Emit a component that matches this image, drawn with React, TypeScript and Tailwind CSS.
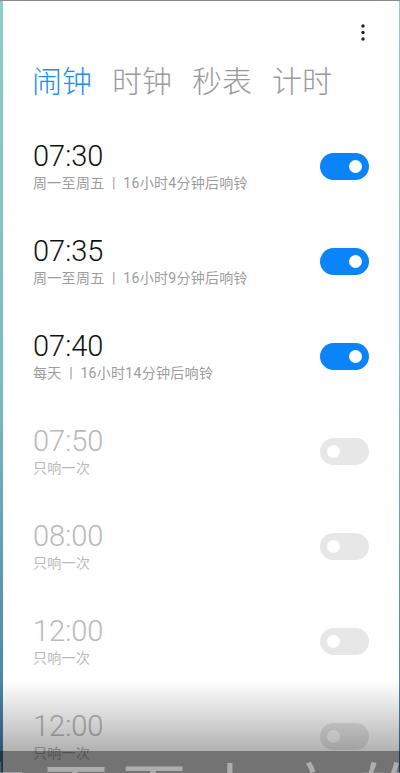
import React from "react";

type Alarm = {
  time: string;
  note: string;
  on: boolean;
};

const alarms: Alarm[] = [
  { time: "07:30", note: "周一至周五 | 16小时4分钟后响铃", on: true },
  { time: "07:35", note: "周一至周五 | 16小时9分钟后响铃", on: true },
  { time: "07:40", note: "每天 | 16小时14分钟后响铃", on: true },
  { time: "07:50", note: "只响一次", on: false },
  { time: "08:00", note: "只响一次", on: false },
  { time: "12:00", note: "只响一次", on: false },
  { time: "12:00", note: "只响一次", on: false },
];

const Toggle: React.FC<{ on: boolean }> = ({ on }) => (
  <div
    className={
      on
        ? "flex items-center justify-end w-[49px] h-[27px] px-[7px] rounded-full bg-[#0b84fa]"
        : "flex items-center justify-start w-[49px] h-[27px] px-[7px] rounded-full bg-[#e7e7e7]"
    }
  >
    <div className="w-[13px] h-[13px] rounded-full bg-white" />
  </div>
);

const App: React.FC = () => {
  return (
    <div className="relative w-[400px] h-[773px] overflow-hidden border-t border-[#8a8a8a] bg-gradient-to-b from-[#8fcccb] via-[#79bcbf] to-[#3f78a0] pl-[3px] pr-[1px] font-[Roboto,'Noto_Sans_CJK_SC',sans-serif]">
      <div className="h-full bg-white">
        {/* 상단 메뉴 */}
        <div className="flex justify-end pt-[22px] pr-[33px]">
          <svg width="6" height="18" viewBox="0 0 6 18">
            <circle cx="3" cy="3" r="1.7" fill="#222" />
            <circle cx="3" cy="9.5" r="1.7" fill="#222" />
            <circle cx="3" cy="16" r="1.7" fill="#222" />
          </svg>
        </div>

        {/* 탭 */}
        <div className="flex gap-[20px] pl-[29px] mt-[26px] text-[30px] leading-[30px] font-light text-[#9a9a9a]">
          <span className="text-[#1a8cf2]">闹钟</span>
          <span>时钟</span>
          <span>秒表</span>
          <span>计时</span>
        </div>

        {/* 알람 목록 */}
        <div className="mt-[43px] flex flex-col">
          {alarms.map((a, i) => (
            <div
              key={i}
              className="flex items-start justify-between h-[95px] pl-[30px] pr-[30px]"
            >
              <div className="flex flex-col">
                <span
                  className={
                    a.on
                      ? "text-[29px] leading-[32px] font-light text-[#111]"
                      : "text-[29px] leading-[32px] font-light text-[#b9b9b9]"
                  }
                >
                  {a.time}
                </span>
                <span
                  className={
                    a.on
                      ? "mt-[2px] text-[14px] leading-[18px] tracking-[0.3px] whitespace-pre text-[#9c9c9c]"
                      : "mt-[2px] text-[14px] leading-[18px] tracking-[0.3px] whitespace-pre text-[#b9b9b9]"
                  }
                >
                  {a.note.replace(" | ", "  |  ")}
                </span>
              </div>
              <div className="mt-[13px]">
                <Toggle on={a.on} />
              </div>
            </div>
          ))}
        </div>
      </div>

      {/* 하단 그림자 + 자막 */}
      <div className="absolute left-0 right-0 top-[680px] h-[70px] bg-gradient-to-b from-[rgba(0,0,0,0)] to-[rgba(0,0,0,0.3)]" />
      <div className="absolute left-0 right-0 top-[750px] bottom-0 overflow-hidden bg-[rgba(0,0,0,0.55)]">
        <div className="-ml-[34px] mt-[5px] whitespace-nowrap text-[64px] leading-none tracking-[14px] text-[rgba(255,255,255,0.42)] font-['Noto_Sans_CJK_SC',sans-serif]">
          去下面上方的滚
        </div>
      </div>
    </div>
  );
};

export default App;
